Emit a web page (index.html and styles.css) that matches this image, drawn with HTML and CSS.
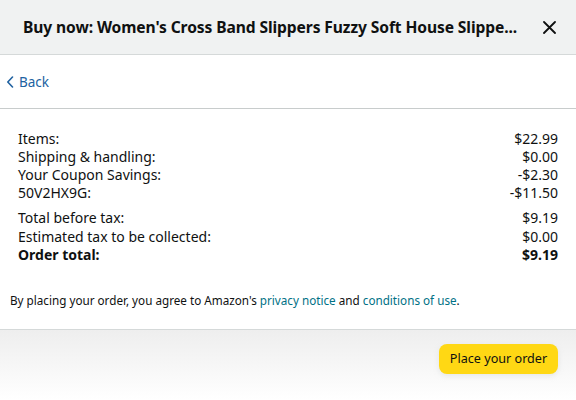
FILE: index.html
```html
<!DOCTYPE html>
<html>
<head>
<meta charset="utf-8">
<link rel="stylesheet" href="styles.css">
</head>
<body>
<div class="modal">
  <header class="header">
    <h1 class="title">Buy now: Women's Cross Band Slippers Fuzzy Soft House Slippe...</h1>
    <button class="close" aria-label="Close">
      <svg width="13" height="13" viewBox="0 0 13 13"><path d="M1 1L12 12M12 1L1 12" stroke="#0f1111" stroke-width="1.8" stroke-linecap="round"/></svg>
    </button>
  </header>
  <div class="back-row">
    <a class="back" href="#">
      <svg width="8" height="12" viewBox="0 0 8 12"><path d="M6.5 1L1.8 6l4.7 5" fill="none" stroke="#2162a1" stroke-width="1.6" stroke-linecap="round" stroke-linejoin="round"/></svg>
      <span>Back</span>
    </a>
  </div>
  <section class="summary">
    <div class="group">
      <div class="row"><span>Items:</span><span>$22.99</span></div>
      <div class="row"><span>Shipping &amp; handling:</span><span>$0.00</span></div>
      <div class="row"><span>Your Coupon Savings:</span><span>-$2.30</span></div>
      <div class="row"><span>50V2HX9G:</span><span>-$11.50</span></div>
    </div>
    <div class="group">
      <div class="row"><span>Total before tax:</span><span>$9.19</span></div>
      <div class="row"><span>Estimated tax to be collected:</span><span>$0.00</span></div>
      <div class="row total"><span>Order total:</span><span>$9.19</span></div>
    </div>
  </section>
  <p class="agree">By placing your order, you agree to Amazon's <a href="#">privacy notice</a> and <a href="#">conditions of use</a>.</p>
  <footer class="footer">
    <button class="place">Place your order</button>
  </footer>
</div>
</body>
</html>
```
FILE: styles.css
```css
html, body {
  margin: 0;
  padding: 0;
  background: #fff;
}
body {
  font-family: "Noto Sans", "Open Sans", sans-serif;
  color: #0f1111;
  width: 576px;
  height: 400px;
  overflow: hidden;
}
.modal {
  display: flex;
  flex-direction: column;
  height: 400px;
}
.header {
  height: 55px;
  box-sizing: border-box;
  background: #f0f2f2;
  border-bottom: 1px solid #d5d9d9;
  display: flex;
  align-items: center;
  justify-content: space-between;
  padding: 0 20px 0 23px;
}
.title {
  margin: 0;
  font-size: 15.6px;
  font-weight: 700;
  white-space: nowrap;
  letter-spacing: -0.1px;
}
.close {
  border: 0;
  background: none;
  padding: 0;
  width: 13px;
  height: 13px;
  display: flex;
}
.back-row {
  height: 54px;
  box-sizing: border-box;
  border-bottom: 1px solid #c8cccc;
  display: flex;
  align-items: center;
  padding-left: 6px;
}
.back {
  display: flex;
  align-items: center;
  gap: 5px;
  color: #2162a1;
  text-decoration: none;
  font-size: 13.5px;
}
.summary {
  padding: 21px 18px 0 18px;
  font-size: 14px;
}
.group + .group {
  margin-top: 7px;
}
.row {
  display: flex;
  justify-content: space-between;
  line-height: 18.5px;
  height: 18.5px;
}
.group:first-child .row {
  line-height: 18px;
  height: 18px;
}
.total {
  font-weight: 700;
}
.agree {
  margin: 27px 0 0 0;
  padding: 0 10px 21px;
  font-size: 11.7px;
  line-height: 16px;
  border-bottom: 1px solid #d5d9d9;
}
.agree a {
  color: #007185;
  text-decoration: none;
}
.footer {
  flex: 1;
  background: linear-gradient(#eeeeee, #ffffff);
  display: flex;
  justify-content: flex-end;
  align-items: flex-start;
  padding: 14px 18px 0 0;
}
.place {
  font-family: inherit;
  background: #ffd814;
  border: 0;
  border-radius: 8px;
  width: 119px;
  height: 30px;
  font-size: 12.6px;
  color: #0f1111;
  box-shadow: 0 2px 5px rgba(213, 217, 217, 0.5);
  padding: 0;
}
```
